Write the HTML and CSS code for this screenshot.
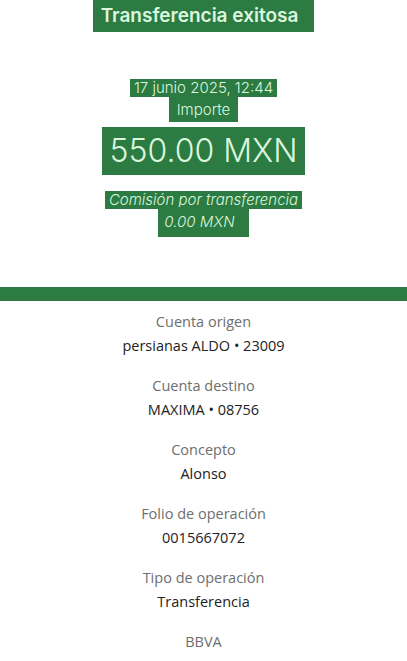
FILE: index.html
```html
<!DOCTYPE html>
<html lang="es">
<head>
  <meta charset="UTF-8" />
  <meta name="viewport" content="width=device-width, initial-scale=1.0" />
  <title>Transferencia exitosa</title>
  <link rel="stylesheet" href="styles.css">
</head>
<body>

  <!-- Resumen -->
  <div class="summary">
    <div class="row title-row"><span class="hl title">Transferencia exitosa</span></div>
    <div class="row date-row"><span class="hl date">17 junio 2025, 12:44</span></div>
    <div class="row"><span class="hl importe">Importe</span></div>
    <div class="row"><span class="hl amount">550.00 MXN</span></div>
    <div class="row fee-row"><span class="hl fee">Comisión por transferencia</span></div>
    <div class="row"><span class="hl fee-value">0.00 MXN</span></div>
  </div>

  <div class="green-bar"></div>

  <!-- Detalle -->
  <div class="details">
    <div class="item">
      <div class="label">Cuenta origen</div>
      <div class="value">persianas ALDO • 23009</div>
    </div>
    <div class="item">
      <div class="label">Cuenta destino</div>
      <div class="value">MAXIMA • 08756</div>
    </div>
    <div class="item">
      <div class="label">Concepto</div>
      <div class="value">Alonso</div>
    </div>
    <div class="item">
      <div class="label">Folio de operación</div>
      <div class="value">0015667072</div>
    </div>
    <div class="item">
      <div class="label">Tipo de operación</div>
      <div class="value">Transferencia</div>
    </div>
    <div class="item">
      <div class="label">BBVA</div>
    </div>
  </div>

</body>
</html>
```

FILE: styles.css
```css
body {
  margin: 0;
  background-color: #fff;
  font-family: "Open Sans", Arial, sans-serif;
}

.summary {
  height: 287px;
  text-align: center;
}

.row {
  display: flex;
  justify-content: center;
}

.hl {
  display: inline-block;
  background-color: #2b7b42;
  color: #dcf6de;
}

.title {
  font-family: Inter, sans-serif;
  font-weight: 600;
  font-size: 19px;
  line-height: 32px;
  padding: 0 16px 0 8px;
}

.date-row {
  margin-top: 47px;
}

.date {
  font-family: Inter, sans-serif;
  font-weight: 300;
  font-size: 15px;
  line-height: 18px;
  padding: 0 4px;
}

.importe {
  font-family: Inter, sans-serif;
  font-weight: 300;
  font-size: 15px;
  line-height: 25px;
  padding: 0 8px;
}

.amount {
  font-family: Inter, sans-serif;
  font-weight: 300;
  font-size: 32px;
  line-height: 48px;
  padding: 0 8px;
  margin-top: 5px;
}

.fee-row {
  margin-top: 16px;
}

.fee {
  font-family: Inter, sans-serif;
  font-weight: 300;
  font-style: italic;
  font-size: 15px;
  line-height: 18px;
  padding: 0 4px;
}

.fee-value {
  font-family: Inter, sans-serif;
  font-weight: 300;
  font-style: italic;
  font-size: 15px;
  line-height: 30px;
  padding: 0 14px 0 6px;
  margin-top: -2px;
}

.green-bar {
  height: 14px;
  background-color: #2b7b42;
}

.details {
  padding-top: 9px;
  text-align: center;
}

.item {
  margin-bottom: 16px;
}

.label {
  color: #6e6e6e;
  font-size: 14.5px;
  line-height: 24px;
}

.value {
  color: #222;
  font-size: 14.5px;
  line-height: 24px;
}
```
